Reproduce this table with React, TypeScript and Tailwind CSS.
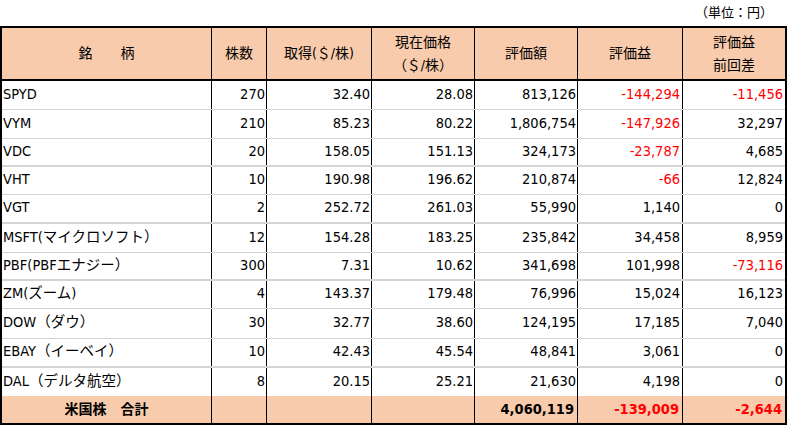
const COLS = 'grid grid-cols-[210px_55px_105px_103px_103px_105px_102px]';

interface Holding {
  name: string;
  shares: string;
  cost: string;
  price: string;
  value: string;
  gain: string;
  diff: string;
  h: string;
  line: string;
}

const holdings: Holding[] = [
  { name: 'SPYD', shares: '270', cost: '32.40', price: '28.08', value: '813,126', gain: '-144,294', diff: '-11,456', h: 'h-[29px]', line: 'border-b border-[#d4d4d4]' },
  { name: 'VYM', shares: '210', cost: '85.23', price: '80.22', value: '1,806,754', gain: '-147,926', diff: '32,297', h: 'h-[29px]', line: 'border-b border-[#d4d4d4]' },
  { name: 'VDC', shares: '20', cost: '158.05', price: '151.13', value: '324,173', gain: '-23,787', diff: '4,685', h: 'h-[28px]', line: 'border-b-2 border-[#d4d4d4]' },
  { name: 'VHT', shares: '10', cost: '190.98', price: '196.62', value: '210,874', gain: '-66', diff: '12,824', h: 'h-[28px]', line: 'border-b border-[#d4d4d4]' },
  { name: 'VGT', shares: '2', cost: '252.72', price: '261.03', value: '55,990', gain: '1,140', diff: '0', h: 'h-[29px]', line: 'border-b-2 border-[#d4d4d4]' },
  { name: 'MSFT(マイクロソフト）', shares: '12', cost: '154.28', price: '183.25', value: '235,842', gain: '34,458', diff: '8,959', h: 'h-[29px]', line: 'border-b border-[#d4d4d4]' },
  { name: 'PBF(PBFエナジー）', shares: '300', cost: '7.31', price: '10.62', value: '341,698', gain: '101,998', diff: '-73,116', h: 'h-[28px]', line: 'border-b-2 border-[#d4d4d4]' },
  { name: 'ZM(ズーム)', shares: '4', cost: '143.37', price: '179.48', value: '76,996', gain: '15,024', diff: '16,123', h: 'h-[28px]', line: 'border-b border-[#d4d4d4]' },
  { name: 'DOW（ダウ）', shares: '30', cost: '32.77', price: '38.60', value: '124,195', gain: '17,185', diff: '7,040', h: 'h-[30px]', line: 'border-b border-[#d4d4d4]' },
  { name: 'EBAY（イーベイ）', shares: '10', cost: '42.43', price: '45.54', value: '48,841', gain: '3,061', diff: '0', h: 'h-[29px]', line: 'border-b-2 border-[#d4d4d4]' },
  { name: 'DAL（デルタ航空）', shares: '8', cost: '20.15', price: '25.21', value: '21,630', gain: '4,198', diff: '0', h: 'h-[28px]', line: '' }
];

const num = (v: string) =>
  v.startsWith('-') ? 'text-[#ff0000]' : 'text-black';

const App = () => {
  return (
    <div
      className="w-[803px] h-[426px] bg-white text-black"
      style={{ fontFamily: '"DejaVu Sans Condensed", "DejaVu Sans", "Noto Sans CJK JP", sans-serif' }}
    >
      {/* unit label */}
      <div className="h-[26px] flex items-center justify-end pr-[30px] pb-[2px] text-[13px] leading-none">
        （単位：円）
      </div>

      <div className="w-[787px] border-2 border-black">
        {/* Header */}
        <div className={`${COLS} h-[53px] bg-[#f8cbad] border-b-2 border-black text-[14px]`}>
          <div className="border-r border-black flex items-center justify-center">銘　　柄</div>
          <div className="border-r border-black flex items-center justify-center">株数</div>
          <div className="border-r border-black flex items-center justify-center">取得(＄/株)</div>
          <div className="border-r border-black flex flex-col items-center justify-center leading-[23px]">
            <span>現在価格</span>
            <span>（＄/株）</span>
          </div>
          <div className="border-r border-black flex items-center justify-center">評価額</div>
          <div className="border-r border-black flex items-center justify-center">評価益</div>
          <div className="flex flex-col items-center justify-center leading-[23px]">
            <span>評価益</span>
            <span>前回差</span>
          </div>
        </div>

        {/* Rows */}
        {holdings.map((r) => (
          <div key={r.name} className={`${COLS} ${r.h} ${r.line} text-[14.5px] leading-none`}>
            <div className="border-r border-black flex items-center pl-[1px] pb-[2px] whitespace-nowrap">
              {r.name}
            </div>
            <div className="border-r border-black flex items-center justify-end pr-[1px] pb-[2px]">{r.shares}</div>
            <div className="border-r border-black flex items-center justify-end pr-[1px] pb-[2px]">{r.cost}</div>
            <div className="border-r border-black flex items-center justify-end pr-[1px] pb-[2px]">{r.price}</div>
            <div className="border-r border-black flex items-center justify-end pr-[1px] pb-[2px]">{r.value}</div>
            <div className={`border-r border-black flex items-center justify-end pr-[2px] pb-[2px] ${num(r.gain)}`}>
              {r.gain}
            </div>
            <div className={`flex items-center justify-end pr-[2px] pb-[2px] ${num(r.diff)}`}>{r.diff}</div>
          </div>
        ))}

        {/* Total */}
        <div className={`${COLS} h-[27px] bg-[#f8cbad] font-bold text-[14.5px] leading-none`}>
          <div className="border-r border-black flex items-center justify-center text-[14px] pb-[1px]">米国株　合計</div>
          <div className="border-r border-black" />
          <div className="border-r border-black" />
          <div className="border-r border-black" />
          <div className="border-r border-black flex items-center justify-end pr-[3px]">4,060,119</div>
          <div className="border-r border-black flex items-center justify-end pr-[3px] text-[#ff0000]">-139,009</div>
          <div className="flex items-center justify-end pr-[3px] text-[#ff0000]">-2,644</div>
        </div>
      </div>
    </div>
  );
};

export default App;
